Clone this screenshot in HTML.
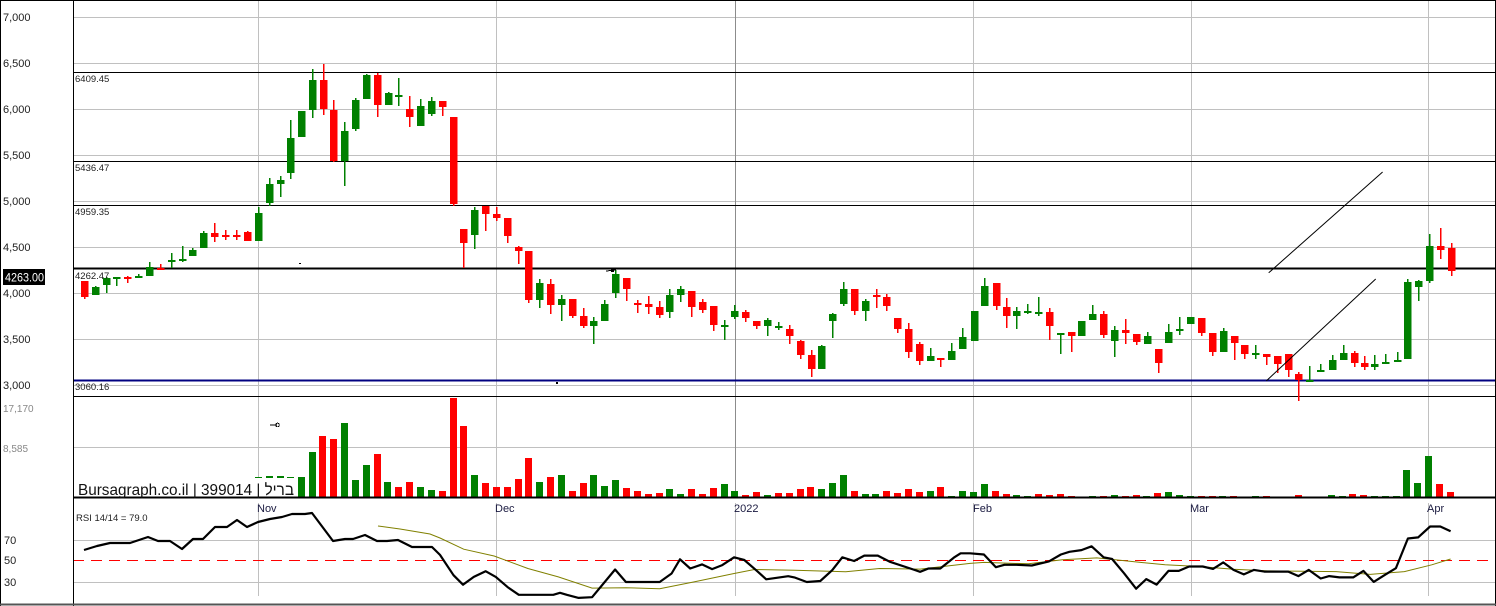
<!DOCTYPE html>
<html><head><meta charset="utf-8">
<style>
html,body{margin:0;padding:0;background:#fff;}
body{width:1496px;height:606px;overflow:hidden;position:relative;font-family:"Liberation Sans","Noto Sans CJK JP",sans-serif;}
svg{position:absolute;left:0;top:0;}
text{font-family:"Liberation Sans",sans-serif;}
</style></head>
<body>
<svg id="s" width="1496" height="606" viewBox="0 0 1496 606" xmlns="http://www.w3.org/2000/svg" shape-rendering="crispEdges">
<g id="grid" stroke="#c0c0c0" stroke-width="1">
<line x1="73" y1="17.5" x2="1495" y2="17.5"/><line x1="73" y1="63.5" x2="1495" y2="63.5"/>
<line x1="73" y1="109.5" x2="1495" y2="109.5"/><line x1="73" y1="155.5" x2="1495" y2="155.5"/>
<line x1="73" y1="201.5" x2="1495" y2="201.5"/><line x1="73" y1="247.5" x2="1495" y2="247.5"/>
<line x1="73" y1="293.5" x2="1495" y2="293.5"/><line x1="73" y1="339.5" x2="1495" y2="339.5"/>
<line x1="73" y1="385.5" x2="1495" y2="385.5"/>
<line x1="73" y1="447.5" x2="1495" y2="447.5"/>
<line x1="73" y1="540.5" x2="1495" y2="540.5"/><line x1="73" y1="582.5" x2="1495" y2="582.5"/>
<line x1="258.5" y1="0" x2="258.5" y2="497"/><line x1="496.5" y1="0" x2="496.5" y2="497"/>
<line x1="973.5" y1="0" x2="973.5" y2="497"/><line x1="1191.5" y1="0" x2="1191.5" y2="497"/><line x1="1428.5" y1="0" x2="1428.5" y2="497"/>
<line x1="735.5" y1="0" x2="735.5" y2="497" stroke="#8c8c8c"/>
<line x1="258.5" y1="503" x2="258.5" y2="596"/><line x1="496.5" y1="503" x2="496.5" y2="596"/>
<line x1="735.5" y1="503" x2="735.5" y2="596"/><line x1="973.5" y1="503" x2="973.5" y2="596"/>
<line x1="1191.5" y1="503" x2="1191.5" y2="596"/><line x1="1428.5" y1="503" x2="1428.5" y2="596"/>
</g>
<line x1="73" y1="560.5" x2="1495" y2="560.5" stroke="#ff0000" stroke-width="1.3" stroke-dasharray="11,7"/>
<g stroke="#000" stroke-width="1.3">
<line x1="73" y1="72.5" x2="1495" y2="72.5"/><line x1="73" y1="161.5" x2="1495" y2="161.5"/>
<line x1="73" y1="205.5" x2="1495" y2="205.5"/>
</g>
<line x1="73" y1="268.5" x2="1495" y2="268.5" stroke="#000" stroke-width="2.4"/>
<line x1="73" y1="380.5" x2="1495" y2="380.5" stroke="#000080" stroke-width="2.4"/>
<line x1="73" y1="396.5" x2="1495" y2="396.5" stroke="#000" stroke-width="1.3"/>
<g id="cand"></g>
<g id="vol"></g>
<rect x="75" y="478" width="221" height="19" fill="#fff"/>
<line x1="73" y1="497.5" x2="1495" y2="497.5" stroke="#000" stroke-width="2.4"/>
<g stroke="#000" stroke-width="1" shape-rendering="auto">
<line x1="1268.7" y1="272.8" x2="1382.6" y2="172"/>
<line x1="1266.3" y1="380.9" x2="1375.7" y2="279"/>
</g>
<g id="rsi"></g>
<line x1="73.5" y1="0" x2="73.5" y2="606" stroke="#000" stroke-width="1.3"/>
<line x1="0.5" y1="0" x2="0.5" y2="606" stroke="#000"/>
<line x1="0" y1="0.5" x2="1496" y2="0.5" stroke="#000"/>
<line x1="1495.5" y1="0" x2="1495.5" y2="606" stroke="#000"/>
<line x1="0" y1="604.5" x2="1496" y2="604.5" stroke="#555" stroke-width="2"/>
<g font-size="11" fill="#222">
<text x="3" y="21">7,000</text><text x="3" y="67">6,500</text><text x="3" y="113">6,000</text>
<text x="3" y="159">5,500</text><text x="3" y="205">5,000</text><text x="3" y="251">4,500</text>
<text x="3" y="297">4,000</text><text x="3" y="343">3,500</text><text x="3" y="389">3,000</text>
<text x="4" y="544">70</text><text x="4" y="564">50</text><text x="4" y="586">30</text>
</g>
<g font-size="10" fill="#888"><text x="3" y="412">17,170</text><text x="3" y="452">8,585</text></g>
<rect x="3" y="269" width="42" height="16" fill="#000"/>
<text x="5" y="281.5" font-size="12" fill="#fff" textLength="39" lengthAdjust="spacingAndGlyphs">4263.00</text>
<g font-size="9.5" fill="#222">
<text x="75" y="82">6409.45</text><text x="75" y="171">5436.47</text><text x="75" y="215">4959.35</text>
<text x="75" y="279">4262.47</text><text x="75" y="390">3060.16</text>
<text x="76" y="521">RSI 14/14 = 79.0</text>
</g>
<g font-size="11" fill="#1a1a40">
<text x="257" y="512">Nov</text><text x="495" y="512">Dec</text><text x="734" y="512">2022</text>
<text x="973" y="512">Feb</text><text x="1190" y="512">Mar</text><text x="1427" y="512">Apr</text>
</g>
<text x="78" y="495" font-size="16" fill="#111" textLength="216" lengthAdjust="spacingAndGlyphs" font-family="Liberation Sans, Noto Sans CJK JP, sans-serif">Bursagraph.co.il | 399014 | בריל</text>
<rect x="299" y="263" width="2" height="1" fill="#000"/>
<rect x="556" y="382" width="2" height="2" fill="#000"/>
<line x1="270" y1="425" x2="277" y2="425" stroke="#000"/><circle cx="277.5" cy="425" r="1.8" fill="none" stroke="#000"/>
<line x1="606" y1="271" x2="616" y2="270" stroke="#000"/><rect x="611" y="268" width="3" height="4" fill="#000"/>
</svg>
<script>
var G='#008000',R='#ff0000';
var c1=[[84,281,297,281,299,'r'],[95,287,295,286,295,'g'],[106,278,285,277,293,'g'],[116,277,279,277,286,'g'],[127,277,279,276,283,'r'],[138,276,278,274,278,'g'],[149,267,276,262,276,'g'],[160,268,270,264,270,'r'],[171,260,262,253,268,'g'],[182,259,261,246,262,'g'],[192,250,256,248,256,'g'],[203,233,248,231,248,'g'],[214,233,237,223,242,'r'],[225,235,237,230,240,'r'],[236,235,237,230,240,'r'],[247,232,241,231,241,'r'],[258,213,241,207,241,'g'],[269,184,203,178,206,'g'],[280,180,184,176,197,'g'],[290,138,173,120,179,'g'],[301,111,137,111,137,'g'],[312,80,110,69,118,'g'],[323,80,109,64,115,'r'],[333,110,161,100,162,'r'],[344,131,161,122,186,'g'],[355,100,129,98,131,'g'],[366,75,99,74,99,'g'],[377,75,105,73,117,'r'],[388,93,105,92,105,'g'],[398,95,97,78,106,'g'],[409,109,117,96,127,'r'],[420,106,126,99,126,'g'],[431,101,114,97,116,'g'],[442,101,107,101,116,'r'],[453,117,204,117,206,'r']];
var z3=[[40,147,188,147,265,'r'],[73,90,165,82,207,'g'],[106,77,101,77,152,'r'],[139,102,113,82,122,'r'],[172,114,167,114,188,'r'],[205,200,212,197,251,'r'],[235,213,359,213,368,'r'],[268,309,359,297,383,'g'],[301,312,374,297,401,'r'],[334,357,374,345,422,'g'],[367,357,407,357,413,'r'],[400,408,437,384,443,'r'],[430,423,437,411,491,'g'],[463,372,422,360,422,'g'],[496,282,338,270,353,'g'],[529,294,326,294,362,'r'],[562,368,371,360,398,'r'],[595,372,380,348,401,'r'],[628,381,404,363,413,'r'],[658,345,395,327,413,'g'],[691,327,344,318,365,'g'],[724,333,380,333,410,'r'],[757,366,389,357,398,'r'],[790,378,434,378,452,'r'],[823,435,438,420,479,'g'],[853,393,410,375,416,'g'],[886,396,413,390,425,'r'],[919,423,437,423,446,'r'],[952,420,437,413,467,'g'],[985,439,442,425,449,'g'],[1018,447,467,435,491,'r'],[1051,483,524,480,536,'r'],[1084,525,566,510,590,'r'],[1114,498,566,494,566,'g'],[1147,402,422,399,473,'g'],[1180,327,371,306,377,'g'],[1213,327,392,327,404,'r'],[1246,363,392,357,422,'g'],[1279,345,350,327,383,'r'],[1309,351,377,342,392,'r'],[1342,414,446,414,458,'r'],[1375,447,515,429,533,'r'],[1408,491,542,485,554,'r'],[1441,528,542,504,542,'g'],[1471,534,539,534,560,'r'],[1504,513,539,489,539,'g'],[1537,471,506,444,506,'g']];
var z4=[[40,441,530,441,530,'g'],[71,369,428,345,428,'g'],[104,360,428,360,440,'r'],[135,429,455,405,491,'r'],[165,441,455,429,494,'g'],[197,441,443,420,449,'g'],[229,444,449,402,455,'g'],[261,444,485,434,527,'r'],[293,505,508,505,566,'g'],[326,504,515,504,563,'r'],[355,471,515,471,515,'g'],[387,450,467,423,467,'g'],[419,450,512,441,521,'r'],[451,498,530,485,575,'g'],[484,498,506,465,539,'r'],[516,510,532,510,542,'r'],[546,516,539,503,539,'g'],[578,552,593,552,623,'r'],[609,504,536,480,536,'g'],[641,494,497,459,512,'g'],[674,459,479,459,479,'g'],[706,462,506,462,515,'r'],[738,507,563,507,572,'r'],[768,500,563,491,563,'g'],[800,516,536,516,584,'r'],[832,540,566,540,581,'r'],[864,564,566,542,581,'g'],[896,567,575,567,599,'r'],[928,573,596,573,623,'r'],[958,567,614,567,635,'r'],[990,627,644,620,704,'r'],[1022,643,646,604,648,'g'],[1053,614,617,598,617,'g'],[1087,585,614,570,614,'g'],[1120,564,584,540,584,'g'],[1151,564,593,558,605,'r'],[1181,594,605,574,614,'r'],[1212,598,605,570,614,'g'],[1244,592,596,567,596,'g'],[1277,586,590,561,590,'g'],[1308,357,581,348,581,'g'],[1341,354,371,350,413,'g'],[1373,252,353,216,360,'g'],[1403,253,263,198,290,'r'],[1435,258,326,243,338,'r']];
function conv(a,ox,oy,s){return a.map(function(d){return [ox+d[0]/s,oy+d[1]/s,oy+d[2]/s,oy+d[3]/s,oy+d[4]/s,d[5]];});}
var C=c1.concat(conv(z3,450,180,3),conv(z4,960,160,2.925));
var h='';
C.forEach(function(d){var x=Math.round(d[0]),col=d[5]=='g'?G:R;
var bt=Math.round(d[1]),bb=Math.round(d[2]);if(bb-bt<2)bb=bt+2;
h+='<rect x="'+x+'" y="'+Math.round(d[3])+'" width="1.3" height="'+Math.max(1,Math.round(d[4])-Math.round(d[3]))+'" fill="'+col+'"/>';
h+='<rect x="'+(x-3)+'" y="'+bt+'" width="7.3" height="'+(bb-bt)+'" fill="'+col+'"/>';});
document.getElementById('cand').innerHTML=h;
var v2=[[258,477,'g'],[269,476,'g'],[280,476,'g'],[290,477,'g'],[301,477,'g'],[312,452,'g'],[322,436,'r'],[333,439,'r'],[344,423,'g'],[355,480,'g'],[366,465,'g'],[377,454,'r'],[387,482,'g'],[398,487,'r'],[409,482,'r'],[420,487,'g'],[431,490,'g'],[442,491,'r'],[453,398,'r'],[463,426,'r']];
var v5=[[100,105,'g'],[133,126,'r'],[166,138,'r'],[198,138,'r'],[231,114,'r'],[260,54,'r'],[293,123,'g'],[326,108,'r'],[358,105,'g'],[391,150,'r'],[423,126,'r'],[453,105,'g'],[486,135,'g'],[518,117,'g'],[550,141,'r'],[583,150,'r'],[615,159,'r'],[648,156,'r'],[677,144,'g'],[710,159,'g'],[742,144,'r'],[775,159,'r'],[807,141,'r'],[840,129,'g'],[870,150,'g'],[902,162,'r'],[935,153,'r'],[967,162,'g'],[1000,156,'r'],[1032,156,'r'],[1064,144,'r'],[1095,138,'r'],[1127,144,'g'],[1160,126,'g'],[1192,105,'g'],[1224,150,'r'],[1257,159,'g'],[1287,159,'g'],[1320,150,'r'],[1352,156,'r'],[1385,144,'r'],[1417,153,'r'],[1449,150,'g'],[1479,138,'r'],[1512,165,'g'],[1544,150,'g']];
var v6=[[38,153,'g'],[70,129,'g'],[102,150,'r'],[134,159,'r'],[164,162,'g'],[196,165,'g'],[228,159,'r'],[260,162,'r'],[292,159,'r'],[324,165,'r'],[354,168,'g'],[386,165,'g'],[418,165,'r'],[450,162,'g'],[482,165,'r'],[514,162,'r'],[544,165,'g'],[576,156,'r'],[608,153,'g'],[640,162,'g'],[672,165,'g'],[704,165,'r'],[736,165,'r'],[766,165,'g'],[798,165,'r'],[830,168,'r'],[862,165,'g'],[894,165,'r'],[926,168,'r'],[956,168,'r'],[988,162,'r'],[1020,168,'g'],[1052,168,'g'],[1084,162,'g'],[1116,165,'g'],[1148,159,'r'],[1178,162,'r'],[1210,165,'g'],[1242,165,'g'],[1274,165,'g'],[1306,87,'g'],[1338,126,'g'],[1370,48,'g'],[1402,129,'r'],[1434,153,'r']];
var V=v2.concat(v5.map(function(d){return [440+d[0]/2.958,440+d[1]/2.958,d[2]];}),v6.map(function(d){return [960+d[0]/2.925,440+d[1]/2.925,d[2]];}));
h='';
V.forEach(function(d){var x=Math.round(d[0]),y=Math.round(d[1]);h+='<rect x="'+(x-3)+'" y="'+y+'" width="7" height="'+(498-y)+'" fill="'+(d[2]=='g'?G:R)+'"/>';});
document.getElementById('vol').innerHTML=h;
var r2=[[84,550],[97,546],[110,543],[130,543],[148,537],[158,541],[170,541],[182,549],[193,539],[203,539],[215,527],[227,527],[237,520],[247,527],[258,522],[270,519],[282,517],[292,514],[305,514],[312,513],[333,541],[345,539],[353,539],[365,535],[377,541],[387,541],[398,540],[412,547],[432,547]];
var r5=[[0,340],[40,400],[68,428],[100,405],[135,388],[165,405],[200,435],[233,458],[335,458],[355,452],[375,458],[410,467],[450,465],[518,383],[550,420],[650,420],[685,395],[710,353],[740,380],[775,368],[805,382],[835,370],[870,347],[900,355],[935,385],[965,412],[1030,403],[1050,407],[1085,420],[1125,417],[1160,385],[1190,347],[1225,358],[1255,342],[1295,342],[1330,360],[1400,383],[1420,390],[1445,380],[1480,380],[1520,348],[1540,335],[1568,335]];
var r6=[[70,335],[105,372],[130,365],[165,365],[210,367],[260,355],[295,335],[320,327],[355,322],[385,311],[420,343],[445,348],[480,390],[515,435],[545,407],[575,423],[610,383],[640,383],[670,370],[710,370],[740,377],[770,358],[800,380],[830,393],[860,380],[890,385],[960,385],[990,398],[1020,380],[1055,405],[1080,398],[1110,402],[1150,402],[1180,383],[1210,415],[1245,393],[1275,375],[1310,288],[1340,285],[1375,253],[1405,253],[1435,267]];
var m2=[[378,526],[400,529],[430,534]];
var m5=[[0,290],[70,323],[160,343],[260,380],[350,405],[450,438],[550,437],[650,440],[750,420],[870,395],[930,383],[1050,385],[1200,390],[1300,380],[1420,382],[1568,365]];
var m6=[[70,358],[200,362],[300,350],[400,345],[500,355],[600,365],[700,370],[800,378],[900,383],[1100,385],[1200,393],[1300,385],[1380,365],[1435,348]];
function pts(a,b,c){return a.concat(b.map(function(d){return [440+d[0]/2.958,440+d[1]/2.958];}),c.map(function(d){return [960+d[0]/2.925,440+d[1]/2.925];})).map(function(p){return p[0].toFixed(1)+','+p[1].toFixed(1);}).join(' ');}
document.getElementById('rsi').innerHTML='<polyline points="'+pts(m2,m5,m6)+'" fill="none" stroke="#808000" stroke-width="1" shape-rendering="auto"/><polyline points="'+pts(r2,r5,r6)+'" fill="none" stroke="#000" stroke-width="2.2" stroke-linejoin="round" shape-rendering="auto"/>';
</script>
</body></html>
